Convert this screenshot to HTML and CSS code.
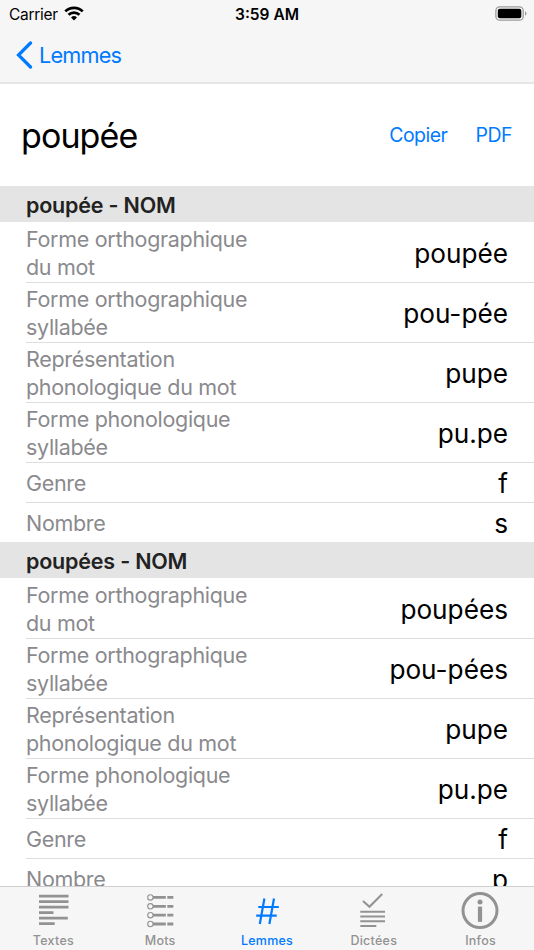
FILE: index.html
```html
<!DOCTYPE html>
<html lang="fr">
<head>
    <meta charset="UTF-8">
    <meta name="viewport" content="width=device-width, initial-scale=1.0">
    <title>Lemmes - poupée</title>
    <link rel="stylesheet" href="styles.css">
</head>
<body>
<div class="app">
    <header class="top">
        <div class="status-bar">
            <div class="carrier">
                <span>Carrier</span>
                <svg class="wifi" width="20" height="15" viewBox="0 0 20 15" fill="none" stroke="#000" stroke-width="2.7">
                    <path d="M1.3 5.4a12.3 12.3 0 0 1 17.4 0"/>
                    <path d="M4.5 8.8a7.8 7.8 0 0 1 11 0"/>
                    <path d="M10 14.5 7 11.5a4.3 4.3 0 0 1 6 0z" fill="#000" stroke="none"/>
                </svg>
            </div>
            <span class="clock">3:59 AM</span>
            <svg class="battery" width="32" height="15" viewBox="0 0 32 15">
                <rect x="0.9" y="0.8" width="27.3" height="13.4" rx="3.8" fill="none" stroke="#9b9b9b" stroke-width="1.3"/>
                <rect x="2.8" y="2.7" width="23.5" height="9.6" rx="2" fill="#000"/>
                <path d="M30 5.3c2 .8 2 3.6 0 4.4z" fill="#9b9b9b"/>
            </svg>
        </div>
        <a href="#" class="back">
            <svg width="18" height="28" viewBox="0 0 18 28" fill="none" stroke="#007aff" stroke-width="3.2" stroke-linecap="round">
                <path d="M15.500 2 3.500 14l12 12"/>
            </svg>
            <span>Lemmes</span>
        </a>
    </header>

    <main class="content">
        <div class="title-row">
            <h1>poupée</h1>
            <a href="#" class="copy">Copier</a>
            <a href="#" class="pdf">PDF</a>
        </div>

        <section>
            <h2>poupée - NOM</h2>
            <dl>
                <div class="row"><dt>Forme orthographique<br>du mot</dt><dd>poupée</dd></div>
                <div class="row"><dt>Forme orthographique<br>syllabée</dt><dd>pou-pée</dd></div>
                <div class="row"><dt>Représentation<br>phonologique du mot</dt><dd>pupe</dd></div>
                <div class="row"><dt>Forme phonologique<br>syllabée</dt><dd>pu.pe</dd></div>
                <div class="row small"><dt>Genre</dt><dd>f</dd></div>
                <div class="row small"><dt>Nombre</dt><dd>s</dd></div>
            </dl>
        </section>

        <section>
            <h2>poupées - NOM</h2>
            <dl>
                <div class="row"><dt>Forme orthographique<br>du mot</dt><dd>poupées</dd></div>
                <div class="row"><dt>Forme orthographique<br>syllabée</dt><dd>pou-pées</dd></div>
                <div class="row"><dt>Représentation<br>phonologique du mot</dt><dd>pupe</dd></div>
                <div class="row"><dt>Forme phonologique<br>syllabée</dt><dd>pu.pe</dd></div>
                <div class="row small"><dt>Genre</dt><dd>f</dd></div>
                <div class="row small"><dt>Nombre</dt><dd>p</dd></div>
            </dl>
        </section>
    </main>

    <nav class="tabs">
        <a href="#" class="tab">
            <svg width="40" height="42" viewBox="0 0 40 42" stroke="#929292" stroke-width="2.8">
                <path d="M6 6.2h29.5M6 11.7h29.5M6 17.2h29.5M6 22.7h14.5M6 28.2h28.8M6 33.6h15.7"/>
            </svg>
            <span>Textes</span>
        </a>
        <a href="#" class="tab">
            <svg width="40" height="42" viewBox="0 0 40 42" fill="none" stroke="#929292">
                <g stroke-width="1.1">
                    <circle cx="10.4" cy="7.4" r="2.7"/>
                    <circle cx="10.4" cy="16.3" r="2.7"/>
                    <circle cx="10.4" cy="25.2" r="2.7"/>
                    <circle cx="10.4" cy="34" r="2.7"/>
                </g>
                <path stroke-width="2.8" d="M13 7.4h12.8M27.3 7.4h6M13 16.3h12.8M27.3 16.3h6M13 25.2h12.8M27.3 25.2h6M13 34h12.8M27.3 34h6"/>
            </svg>
            <span>Mots</span>
        </a>
        <a href="#" class="tab active">
            <svg width="40" height="42" viewBox="0 0 40 42" fill="none" stroke="#007aff" stroke-width="2.2">
                <path d="M17.4 8.5 12.8 34M27 8.5 22.4 34M11.3 17h20.5M9.2 25.7h20.5"/>
            </svg>
            <span>Lemmes</span>
        </a>
        <a href="#" class="tab">
            <svg width="40" height="42" viewBox="0 0 40 42" fill="none" stroke="#929292" stroke-width="2">
                <path d="M9 11 15.5 16.8 28.2 4M6.3 21.7H31M6.3 26.5H31M6.3 31.3H31M6.3 36h16"/>
            </svg>
            <span>Dictées</span>
        </a>
        <a href="#" class="tab">
            <svg width="40" height="42" viewBox="0 0 40 42" fill="none" stroke="#929292">
                <circle cx="19" cy="20.6" r="17" stroke-width="3"/>
                <circle cx="19" cy="11.9" r="2.5" fill="#929292" stroke="none"/>
                <path d="M19 16.6v15.2" stroke-width="4.2"/>
            </svg>
            <span>Infos</span>
        </a>
    </nav>
</div>
</body>
</html>
```
FILE: styles.css
```css
* {
    box-sizing: border-box;
}

body {
    font-family: Inter, 'Liberation Sans', sans-serif;
    margin: 0;
    background-color: #fff;
    overflow: hidden;
}

a {
    color: #007aff;
    text-decoration: none;
}

.app {
    display: flex;
    flex-direction: column;
    height: 950px;
}

/* Status bar and navigation */
.top {
    flex: none;
    height: 84px;
    background-color: #f6f6f6;
    border-bottom: 2px solid #e6e6e6;
}

.status-bar {
    display: grid;
    grid-template-columns: 1fr auto 1fr;
    align-items: center;
    height: 28px;
    padding: 0 7px 0 9px;
    font-size: 15.5px;
}

.carrier {
    display: flex;
    align-items: center;
    gap: 6px;
    letter-spacing: -0.3px;
}

.wifi {
    margin-top: -2px;
}

.clock {
    margin-left: -2px;
    font-weight: 600;
}

.battery {
    justify-self: end;
    margin-top: -2px;
}

.back {
    display: flex;
    align-items: center;
    gap: 5px;
    width: max-content;
    height: 54px;
    padding-left: 15px;
    font-size: 21.7px;
    letter-spacing: -0.8px;
}

.back svg {
    margin-right: 1px;
}

/* Lemma details */
.content {
    flex: 1;
    min-height: 0;
    overflow: hidden;
}

.title-row {
    display: flex;
    align-items: center;
    height: 102px;
    padding: 0 22px 0 21px;
    font-size: 19.5px;
    letter-spacing: -0.5px;
}

h1 {
    margin: 0 auto 0 0;
    font-size: 34px;
    font-weight: 400;
    letter-spacing: -0.9px;
}

.copy {
    margin-right: 28px;
}

h2 {
    height: 36px;
    margin: 0;
    padding-left: 26px;
    background-color: #e4e4e4;
    color: #222;
    font-size: 21.5px;
    font-weight: 600;
    line-height: 38px;
    letter-spacing: -0.2px;
}

dl {
    margin: 0;
}

.row {
    display: flex;
    align-items: center;
    justify-content: space-between;
    height: 60px;
    margin-left: 26px;
    padding: 1px 26px 0 0;
    border-bottom: 1px solid #dedede;
}

.row:first-child {
    height: 61px;
    padding-top: 2px;
}

.row.small {
    height: 40px;
}

.row:last-child {
    height: 39px;
    border-bottom: none;
}

dt {
    color: #8a8a8e;
    font-size: 21.5px;
    line-height: 28.4px;
    letter-spacing: -0.31px;
}

dd {
    margin: 2px 0 0;
    font-size: 26.2px;
    line-height: 32px;
}

/* Tab bar */
.tabs {
    flex: none;
    display: grid;
    grid-template-columns: repeat(5, 1fr);
    height: 64px;
    background-color: #f6f6f6;
    border-top: 1px solid #cfcfcf;
}

.tab {
    display: flex;
    flex-direction: column;
    align-items: center;
    padding-top: 3px;
    color: #929292;
    font-size: 12.5px;
    font-weight: 500;
    line-height: 17px;
    letter-spacing: 0.25px;
}

.tab.active {
    color: #007aff;
    letter-spacing: 0.2px;
}
```
